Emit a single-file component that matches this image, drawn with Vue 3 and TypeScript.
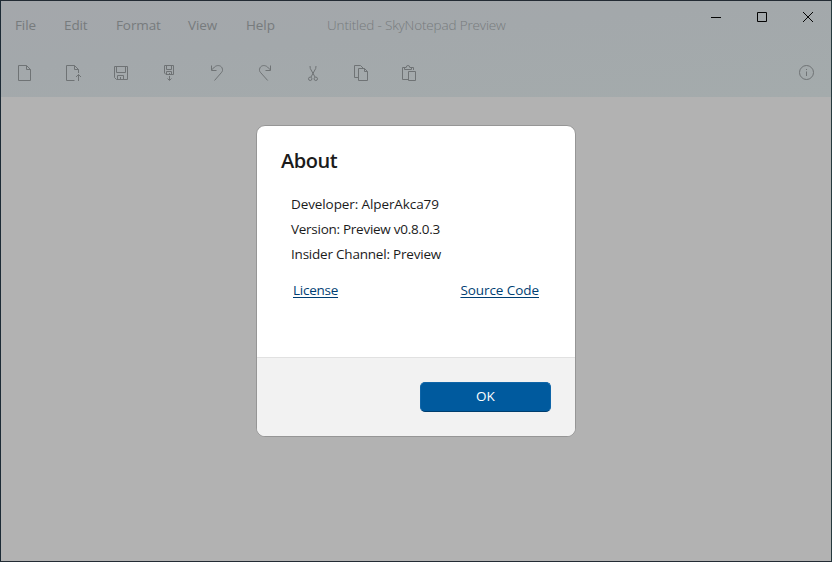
<script setup lang="ts">
interface Tool {
  name: string
  paths: string[]
}

const menus: string[] = ['File', 'Edit', 'Format', 'View', 'Help']

const tools: Tool[] = [
  { name: 'New', paths: ['M2.5 1.5H10.5L14.5 5.5V16.5H2.5ZM10.5 1.5V5.5H14.5'] },
  { name: 'Open', paths: ['M10.5 16.5H2.5V1.5H10.5L14.5 5.5V9M10.5 1.5V5.5H14.5M14.5 17V10.5M12 13L14.5 10.5L17 13'] },
  { name: 'Save', paths: ['M2.5 2.5H15.5V15.5H4.5L2.5 13.5ZM4.5 2.5V8.5H13.5V2.5M5.5 15.5V11.5H11.5V15.5M8.5 13V15.5'] },
  { name: 'Save as', paths: ['M4.5 1.5H13.5V10.5H6L4.5 9ZM6.5 1.5V5.5H11.5V1.5M6.5 10.5V7.5H11.5V10.5M9.5 9V10.5M9.5 12V16M7.5 14.5L9.5 16.5L11.5 14.5'] },
  { name: 'Undo', paths: ['M3.5 1.5V6.5H8.5M3.5 6L6.5 3C9 .8 12.7 1.2 14 3.8C15 5.8 14.6 7.4 13.2 8.8L6.5 16.5'] },
  { name: 'Redo', paths: ['M14.5 1.5V6.5H9.5M14.5 6L11.5 3C9 .8 5.3 1.2 4 3.8C3 5.8 3.4 7.4 4.8 8.8L11.7 16.5'] },
  { name: 'Cut', paths: ['M6 2L6.3 4.5L11 13M12 2L11.7 4.5L7 13', 'M4.5 14.8A1.7 1.7 0 1 0 7.9 14.8A1.7 1.7 0 1 0 4.5 14.8M10.1 14.8A1.7 1.7 0 1 0 13.5 14.8A1.7 1.7 0 1 0 10.1 14.8'] },
  { name: 'Copy', paths: ['M6.5 13.5H2.5V1.5H8.5L11.5 4.5M6.5 4.5H12.5L15.5 7.5V16.5H6.5ZM12.5 4.5V7.5H15.5'] },
  { name: 'Paste', paths: ['M8 15.5H2.5V3.5H5M11 3.5H13.5V6M4.5 3.5V5.5H11.5V3.5H9.8A1.8 2 0 0 0 6.2 3.5ZM8.5 7.5H15.5V16.5H8.5Z'] },
]

const details: string[] = [
  'Developer: AlperAkca79',
  'Version: Preview v0.8.0.3',
  'Insider Channel: Preview',
]
</script>

<template>
  <div class="window">
    <header class="header">
      <div class="titlebar">
        <nav class="menubar">
          <span v-for="menu in menus" :key="menu" class="menu">{{ menu }}</span>
        </nav>
        <span class="title">Untitled - SkyNotepad Preview</span>
        <div class="controls">
          <svg viewBox="0 0 12 12" class="control"><path d="M1 6.5H11" /></svg>
          <svg viewBox="0 0 12 12" class="control"><path d="M1.5 1.5H10.5V10.5H1.5Z" /></svg>
          <svg viewBox="0 0 12 12" class="control"><path d="M1 1L11 11M11 1L1 11" /></svg>
        </div>
      </div>
      <div class="toolbar">
        <svg v-for="tool in tools" :key="tool.name" class="tool" viewBox="0 0 18 18">
          <path v-for="d in tool.paths" :key="d" :d="d" />
        </svg>
        <svg class="tool info" viewBox="0 0 18 18">
          <circle cx="9.5" cy="8.5" r="7" />
          <path d="M9.5 7.5V12M9.5 5V6" />
        </svg>
      </div>
    </header>
    <main class="editor">
      <section class="dialog">
        <div class="content">
          <h1 class="heading">About</h1>
          <div class="details">
            <p v-for="(line, i) in details" :key="line" class="line" :class="`line-${i}`">{{ line }}</p>
          </div>
          <div class="links">
            <a class="link license">License</a>
            <a class="link source">Source Code</a>
          </div>
        </div>
        <footer class="actions">
          <button class="ok" type="button">OK</button>
        </footer>
      </section>
    </main>
  </div>
</template>

<style>
body {
  margin: 0;
  overflow: hidden;
}
</style>

<style scoped>
.window {
  box-sizing: border-box;
  width: 832px;
  height: 562px;
  display: flex;
  flex-direction: column;
  border: 1px solid #232b34;
  border-left-color: #1c2a35;
  border-right-color: #263a3f;
  background: #b2b2b2;
  font-family: "Segoe UI", "Open Sans", "Noto Sans", sans-serif;
  font-size: 13.5px;
}

.header {
  height: 96px;
  flex: none;
  background: linear-gradient(175deg, #a4a7ab 0%, #a3a8ab 40%, #a4abac 100%);
  color: #777b7d;
}

.titlebar {
  height: 48px;
  display: flex;
}

.menubar {
  display: grid;
  grid-template-columns: 49px 52px 72px 58px 81px;
  padding-left: 14px;
  line-height: 48px;
}

.menu {
  letter-spacing: -0.1px;
}

.title {
  line-height: 48px;
  font-weight: 300;
  letter-spacing: -0.15px;
  white-space: nowrap;
}

.controls {
  display: flex;
  gap: 34px;
  margin-left: auto;
  padding: 10px 17px 0 0;
}

.control {
  width: 12px;
  height: 12px;
  fill: none;
  stroke: #050505;
  stroke-width: 1;
}

.toolbar {
  height: 48px;
  display: flex;
  align-items: flex-start;
  gap: 30px;
  padding: 15px 16px 0 15px;
  box-sizing: border-box;
}

.tool {
  width: 18px;
  height: 18px;
  flex: none;
  fill: none;
  stroke: #6f7375;
  stroke-width: 1;
}

.info {
  margin-left: auto;
}

.editor {
  flex: 1;
  display: flex;
  justify-content: center;
  align-items: flex-start;
  padding-top: 28px;
}

.dialog {
  box-sizing: border-box;
  width: 320px;
  height: 312px;
  display: flex;
  flex-direction: column;
  border: 1px solid #969696;
  border-radius: 9px;
  overflow: hidden;
  background: #fff;
  color: #1b1b1b;
}

.content {
  flex: 1;
  padding: 20px 24px 0;
}

.heading {
  margin: 0;
  font-size: 20px;
  line-height: 30px;
  font-weight: 600;
  letter-spacing: -0.45px;
}

.details {
  padding: 16px 0 0 10px;
}

.line {
  margin: 0;
  line-height: 25px;
  white-space: nowrap;
}

.line-0 {
  letter-spacing: -0.1px;
}

.line-1 {
  letter-spacing: -0.27px;
}

.line-2 {
  letter-spacing: -0.21px;
}

.links {
  display: flex;
  justify-content: space-between;
  padding: 11px 12px 0 12px;
  line-height: 25px;
}

.link {
  color: #003e73;
  text-decoration: underline;
  text-decoration-thickness: 1px;
  text-underline-offset: 2px;
}

.license {
  letter-spacing: -0.25px;
}

.source {
  letter-spacing: -0.07px;
}

.actions {
  height: 79px;
  box-sizing: border-box;
  display: flex;
  justify-content: flex-end;
  padding: 24px 24px 0;
  border-top: 1px solid #e1e1e1;
  background: #f2f2f2;
}

.ok {
  width: 131px;
  height: 30px;
  padding: 0 0 2px;
  border: 1px solid #0f65a8;
  border-bottom-color: #003d6d;
  border-radius: 5px;
  background: #005a9e;
  color: #fff;
  font: inherit;
}
</style>
